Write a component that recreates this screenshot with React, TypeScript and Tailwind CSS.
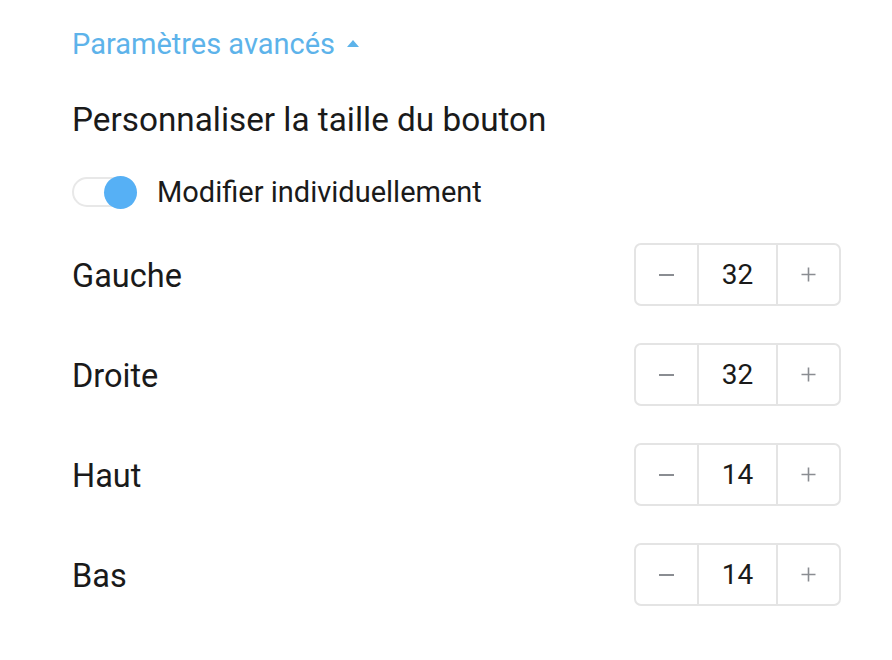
import { useState } from "react";

type StepperRowProps = {
  label: string;
  value: number;
};

const StepperRow = ({ label, value }: StepperRowProps) => {
  const [n, setN] = useState(value);
  return (
    <div className="flex flex-row items-center justify-between h-[63px]">
      <div className="pt-[4px] text-[32.5px] leading-none text-[#1a1a1a]">{label}</div>
      <div className="flex flex-row h-[63px] w-[207px] border-2 border-[#e4e4e4] rounded-[7px] box-border">
        <button
          className="w-[63px] h-full flex items-center justify-center border-r-2 border-[#e4e4e4]"
          onClick={() => setN(n - 1)}
        >
          <span className="block w-[15px] h-[2px] bg-[#8a8d92]" />
        </button>
        <div className="flex-1 h-full flex items-center justify-center text-[28px] text-[#1a1a1a]">{n}</div>
        <button
          className="w-[63px] h-full flex items-center justify-center border-l-2 border-[#e4e4e4]"
          onClick={() => setN(n + 1)}
        >
          <svg width="15" height="15" viewBox="0 0 15 15">
            <path d="M7.5 0.5v14M0.5 7.5h14" stroke="#8a8d92" strokeWidth="1.6" />
          </svg>
        </button>
      </div>
    </div>
  );
};

export default function App() {
  const [on, setOn] = useState(true);
  return (
    <div className="w-[892px] h-[660px] bg-white font-['Roboto',sans-serif] pl-[72px] pr-[51px] pt-[28px] box-border">
      <div className="flex flex-row items-center gap-[12px] text-[29px] leading-[32px] text-[#5db3ea]">
        <span>Paramètres avancés</span>
        <svg width="12" height="7" viewBox="0 0 12 7" className="mt-[-2px]">
          <path d="M0 7L6 0l6 7z" fill="#5db3ea" />
        </svg>
      </div>
      <div className="mt-[42px] text-[33.3px] leading-[36px] text-[#1a1a1a]">Personnaliser la taille du bouton</div>
      <div className="mt-[38px] flex flex-row items-center gap-[20px]">
        <button
          className="relative w-[65px] h-[30px] rounded-full border-2 border-[#e8e8e8] bg-white"
          onClick={() => setOn(!on)}
        >
          <span
            className={`absolute top-[-3px] w-[33px] h-[33px] rounded-full bg-[#56b0f5] ${on ? "right-[-2px]" : "left-[-2px]"}`}
          />
        </button>
        <span className="text-[29px] leading-[32px] text-[#1a1a1a]">Modifier individuellement</span>
      </div>
      <div className="mt-[35px] flex flex-col gap-[37px]">
        <StepperRow label="Gauche" value={32} />
        <StepperRow label="Droite" value={32} />
        <StepperRow label="Haut" value={14} />
        <StepperRow label="Bas" value={14} />
      </div>
    </div>
  );
}
